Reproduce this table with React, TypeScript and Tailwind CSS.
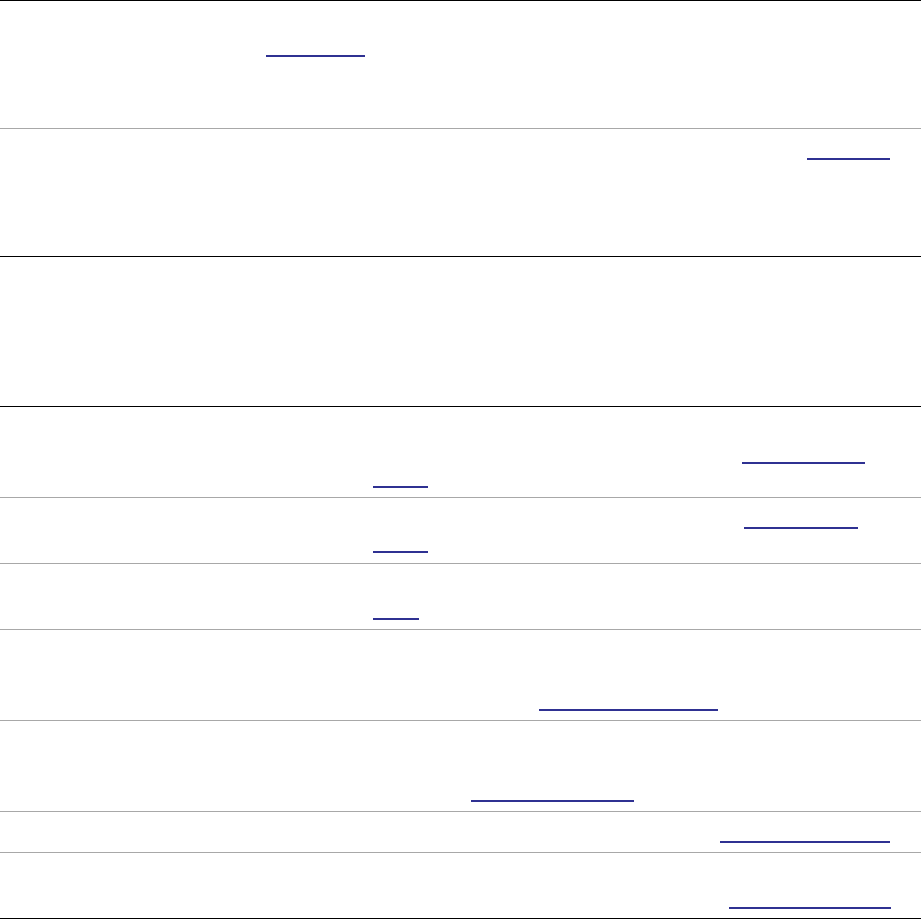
// Rows of a data table whose cell text renders white; only rules and link underlines show.
const Link = ({ className }: { className: string }) => (
  <span className={`block h-[2px] bg-[#2f3192] ${className}`} />
);

export default function App() {
  return (
    <div className="w-[922px] min-h-[919px] bg-white font-['Liberation_Sans',Arial,sans-serif] text-white">
      <div className="w-[921px] border-t border-black">
        {/* first table */}
        <div className="h-[128px] border-b border-[#a8a8a8] pt-[54px]">
          <Link className="ml-[266px] w-[99px]" />
        </div>
        <div className="h-[128px] border-b border-black pt-[29px]">
          <Link className="ml-[807px] w-[83px]" />
        </div>
        {/* empty block */}
        <div className="h-[150px] border-b border-black" />
        {/* second table */}
        <div className="h-[91px] border-b border-[#a8a8a8] pt-[55px]">
          <Link className="ml-[742px] w-[123px]" />
          <Link className="ml-[373px] w-[55px] mt-[22px]" />
        </div>
        <div className="h-[66px] border-b border-[#a8a8a8] pt-[29px]">
          <Link className="ml-[744px] w-[114px]" />
          <Link className="ml-[373px] w-[55px] mt-[22px]" />
        </div>
        <div className="h-[66px] border-b border-[#a8a8a8] pt-[54px]">
          <Link className="ml-[373px] w-[46px]" />
        </div>
        <div className="h-[91px] border-b border-[#a8a8a8] pt-[79px]">
          <Link className="ml-[539px] w-[179px]" />
        </div>
        <div className="h-[91px] border-b border-[#a8a8a8] pt-[79px]">
          <Link className="ml-[471px] w-[163px]" />
        </div>
        <div className="h-[41px] border-b border-[#a8a8a8] pt-[29px]">
          <Link className="ml-[720px] w-[170px]" />
        </div>
        <div className="h-[66px] border-b border-black pt-[54px]">
          <Link className="ml-[729px] w-[162px]" />
        </div>
      </div>
    </div>
  );
}
